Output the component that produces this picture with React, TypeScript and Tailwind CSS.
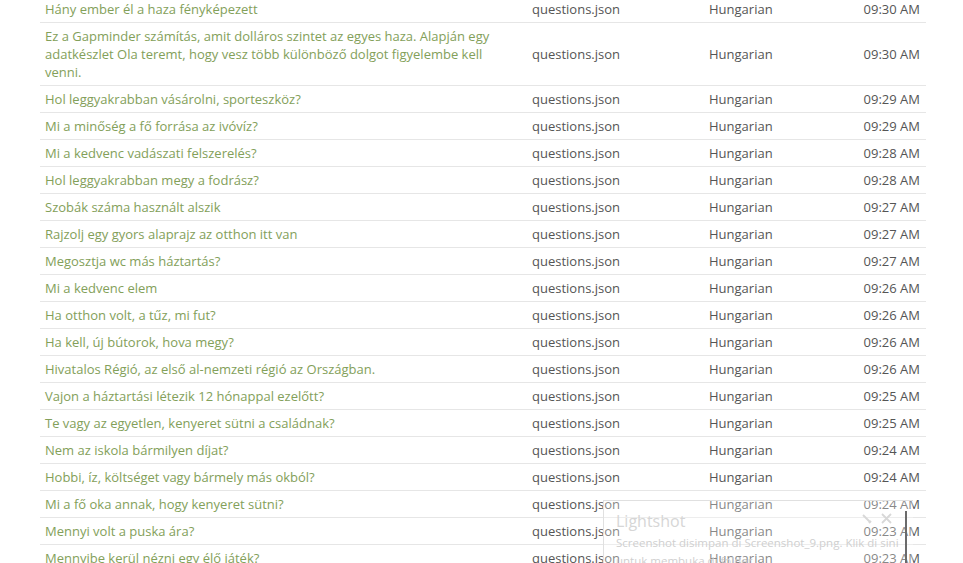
const rows: [string, string][] = [
  ["Hány ember él a haza fényképezett", "09:30 AM"],
  ["Ez a Gapminder számítás, amit dolláros szintet az egyes haza. Alapján egy adatkészlet Ola teremt, hogy vesz több különböző dolgot figyelembe kell venni.", "09:30 AM"],
  ["Hol leggyakrabban vásárolni, sporteszköz?", "09:29 AM"],
  ["Mi a minőség a fő forrása az ivóvíz?", "09:29 AM"],
  ["Mi a kedvenc vadászati felszerelés?", "09:28 AM"],
  ["Hol leggyakrabban megy a fodrász?", "09:28 AM"],
  ["Szobák száma használt alszik", "09:27 AM"],
  ["Rajzolj egy gyors alaprajz az otthon itt van", "09:27 AM"],
  ["Megosztja wc más háztartás?", "09:27 AM"],
  ["Mi a kedvenc elem", "09:26 AM"],
  ["Ha otthon volt, a tűz, mi fut?", "09:26 AM"],
  ["Ha kell, új bútorok, hova megy?", "09:26 AM"],
  ["Hivatalos Régió, az első al-nemzeti régió az Országban.", "09:26 AM"],
  ["Vajon a háztartási létezik 12 hónappal ezelőtt?", "09:25 AM"],
  ["Te vagy az egyetlen, kenyeret sütni a családnak?", "09:25 AM"],
  ["Nem az iskola bármilyen díjat?", "09:24 AM"],
  ["Hobbi, íz, költséget vagy bármely más okból?", "09:24 AM"],
  ["Mi a fő oka annak, hogy kenyeret sütni?", "09:24 AM"],
  ["Mennyi volt a puska ára?", "09:23 AM"],
  ["Mennyibe kerül nézni egy élő játék?", "09:23 AM"],
];

const App = (): JSX.Element => {
  return (
    <div className="relative h-[563px] w-[963px] overflow-hidden bg-white font-['Open_Sans',sans-serif] text-[13px] leading-[18px]">
      <div className="-mt-1 ml-10 w-[886px]">
        {rows.map(([q, t], i) => (
          <div key={i} className="grid grid-cols-[487px_177px_1fr_110px] border-b border-[#e6e6e6]">
            <div className="py-1 pl-[5px] pr-[10px] text-[#83a05a]">{q}</div>
            <div className="flex items-center py-1 pl-[5px] text-[#555]">questions.json</div>
            <div className="flex items-center py-1 pl-[5px] text-[#555]">Hungarian</div>
            <div className="flex items-center justify-end py-1 pr-[6px] text-[#555]">{t}</div>
          </div>
        ))}
      </div>

      {/* Lightshot notification */}
      <div className="pointer-events-none absolute left-[603px] top-[500px] h-[80px] w-[310px] border-l border-t border-[#e0e0e0] bg-white/30">
        <div className="pl-3 pt-[10px] text-[16px] leading-[20px] text-[#d6d6d6]">Lightshot</div>
        <div className="pl-3 pt-[3px] text-[11.5px] leading-[18px] text-[#cfcfcf]">
          Screenshot disimpan di Screenshot_9.png. Klik di sini
          <br />
          untuk membuka di folder
        </div>
        <div className="absolute right-[21px] top-[12px] flex gap-2 text-[#d8d8d8]">
          <svg width="12" height="12" viewBox="0 0 12 12" fill="none" stroke="currentColor" strokeWidth="2">
            <path d="M2 2l7 7" />
            <path d="M8 10l2-2" />
          </svg>
          <svg width="11" height="11" viewBox="0 0 11 11" fill="none" stroke="currentColor" strokeWidth="1.8">
            <path d="M1 1l9 9M10 1l-9 9" />
          </svg>
        </div>
      </div>
      <div className="absolute left-[905px] top-[511px] h-[52px] w-[2px] bg-[#6b6b6b]" />
    </div>
  );
};

export default App;
